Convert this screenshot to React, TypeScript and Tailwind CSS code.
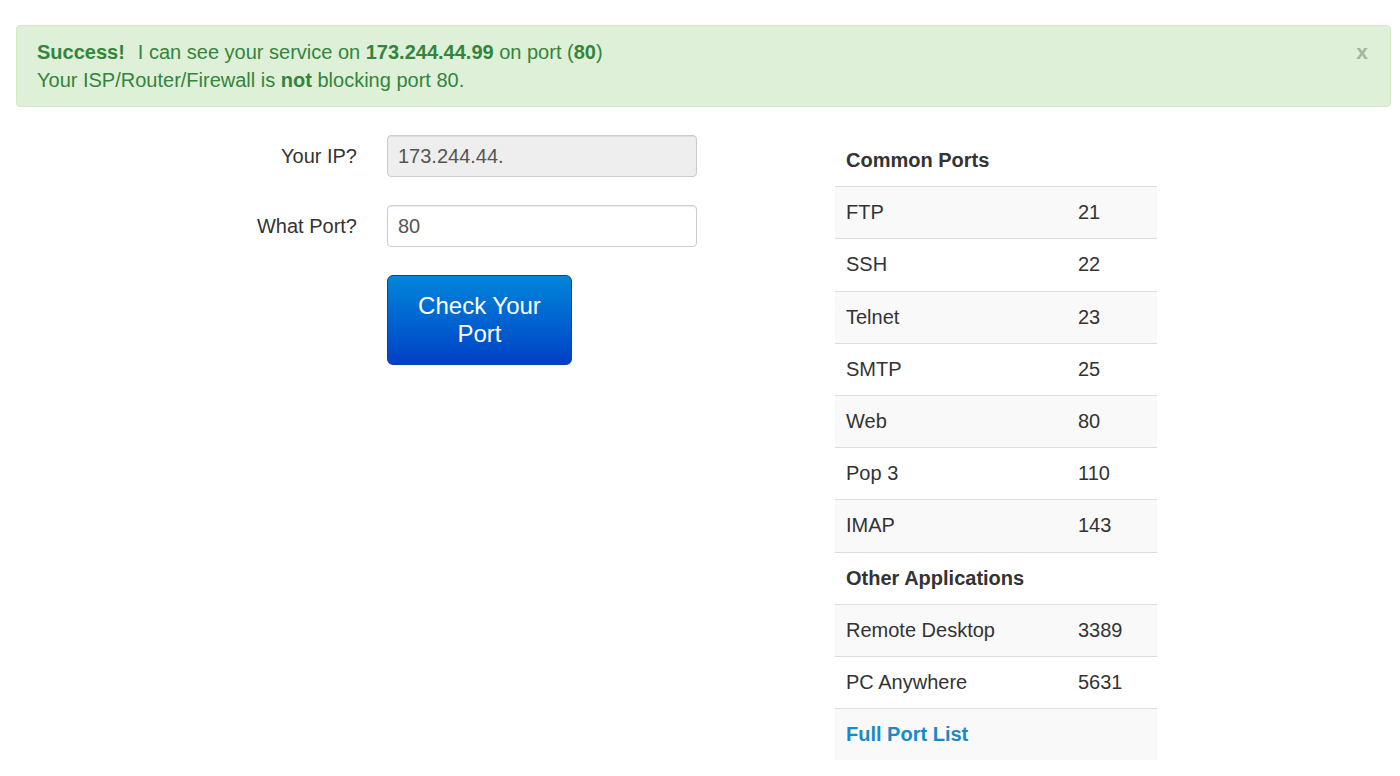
import React from "react";

const commonPorts = [
  ["FTP", "21"],
  ["SSH", "22"],
  ["Telnet", "23"],
  ["SMTP", "25"],
  ["Web", "80"],
  ["Pop 3", "110"],
  ["IMAP", "143"],
];

const otherApps = [
  ["Remote Desktop", "3389"],
  ["PC Anywhere", "5631"],
];

function Row({ name, port, shaded }: { name: string; port: string; shaded: boolean }) {
  return (
    <div
      className={`grid grid-cols-[232px_90px] border-t border-[#dddddd] ${
        shaded ? "bg-[#f9f9f9]" : "bg-white"
      }`}
    >
      <div className="px-[11px] py-[12px] leading-[27.2px]">{name}</div>
      <div className="px-[11px] py-[12px] leading-[27.2px]">{port}</div>
    </div>
  );
}

export default function App() {
  return (
    <div className="min-h-[776px] bg-white font-['Liberation_Sans',Arial,sans-serif] text-[20px] text-[#333333]">
      <div className="pt-[25px] pl-[16px] pr-[9px]">
        <div className="relative rounded-[4px] border border-[#d6e9c6] bg-[#dff0d8] py-[12px] pl-[20px] pr-[40px] leading-[28px] text-[#33843d]">
          <div>
            <b>Success!</b>
            <span className="ml-[13px]">I can see your service on </span>
            <b>173.244.44.99</b> on port (<b>80</b>)
          </div>
          <div>
            Your ISP/Router/Firewall is <b>not</b> blocking port 80.
          </div>
          <button className="absolute right-[22px] top-[12px] text-[21px] font-bold leading-[28px] text-[#a3b59e]">
            x
          </button>
        </div>
      </div>

      <div className="flex pt-[28px] pl-[16px]">
        <div className="grid w-[681px] grid-cols-[341px_310px] content-start gap-x-[30px] gap-y-[28px]">
          <label className="flex h-[42px] items-center justify-end">Your IP?</label>
          <input
            disabled
            value="173.244.44."
            readOnly
            className="h-[42px] w-[310px] rounded-[4px] border border-[#cccccc] bg-[#eeeeee] px-[10px] text-[20px] text-[#555555] shadow-[inset_0_1px_1px_rgba(0,0,0,0.075)]"
          />
          <label className="flex h-[42px] items-center justify-end">What Port?</label>
          <input
            value="80"
            readOnly
            className="h-[42px] w-[310px] rounded-[4px] border border-[#cccccc] bg-white px-[10px] text-[20px] text-[#555555] shadow-[inset_0_1px_1px_rgba(0,0,0,0.075)]"
          />
          <div />
          <button className="h-[90px] w-[185px] rounded-[6px] border border-[#0045b8] bg-gradient-to-b from-[#0a85da] to-[#003fc6] px-[20px] text-[24px] leading-[28px] text-white">
            Check Your Port
          </button>
        </div>

        <div className="ml-[138px] w-[322px]">
          <div className="px-[11px] py-[12px] font-bold leading-[27.2px]">Common Ports</div>
          {commonPorts.map(([n, p], i) => (
            <Row key={n} name={n} port={p} shaded={i % 2 === 0} />
          ))}
          <div className="border-t border-[#dddddd] px-[11px] py-[12px] font-bold leading-[27.2px]">
            Other Applications
          </div>
          {otherApps.map(([n, p], i) => (
            <Row key={n} name={n} port={p} shaded={i % 2 === 0} />
          ))}
          <div className="border-t border-[#dddddd] bg-[#f9f9f9] px-[11px] py-[12px] leading-[27.2px]">
            <a href="#" className="font-bold text-[#1a8ac6]">
              Full Port List
            </a>
          </div>
        </div>
      </div>
    </div>
  );
}
